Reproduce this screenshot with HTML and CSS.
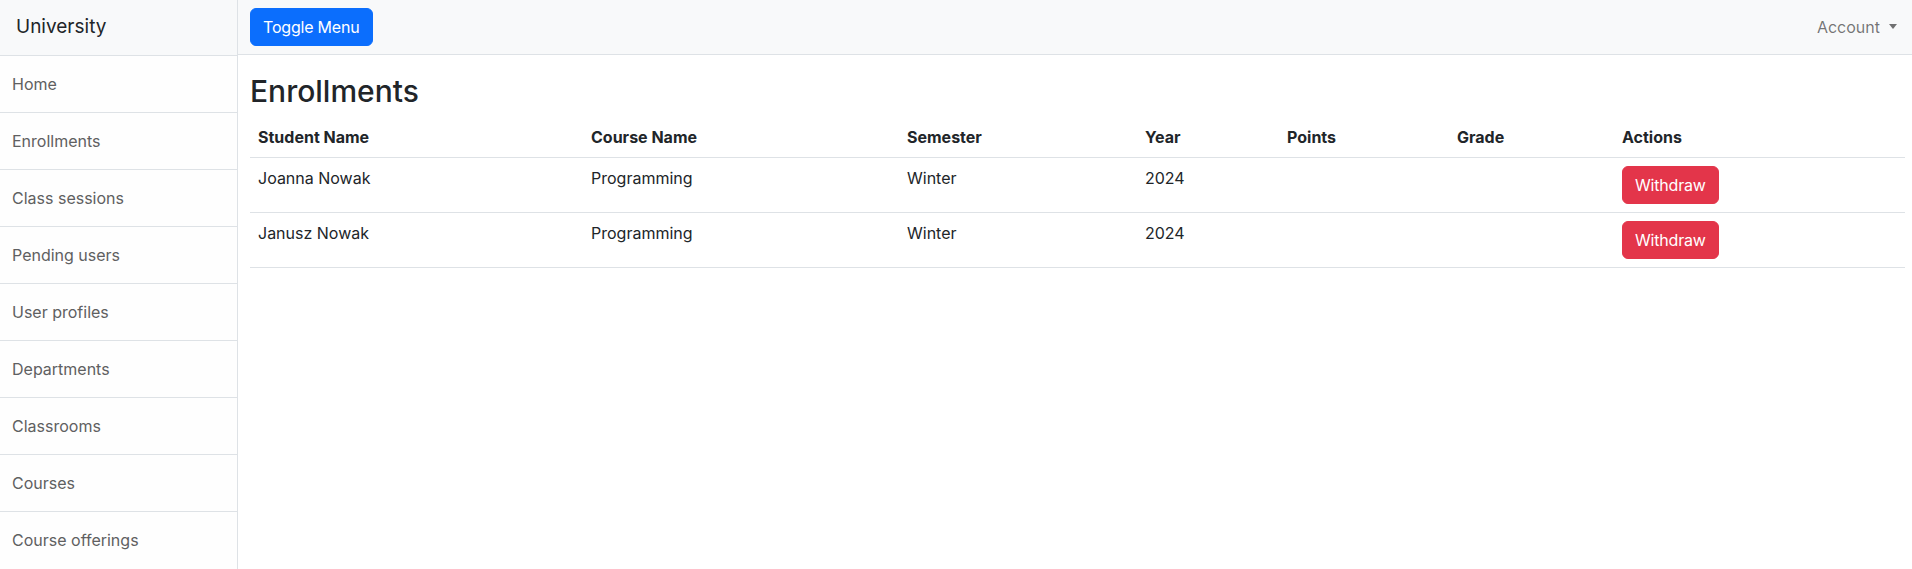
FILE: index.html
```html
<!DOCTYPE html>
<html lang="en">
<head>
<meta charset="utf-8">
<title>Enrollments</title>
<link rel="stylesheet" href="styles.css">
</head>
<body>
<div class="wrapper">
  <aside class="sidebar">
    <div class="sidebar-heading">University</div>
    <nav class="list-group">
      <a class="list-item" href="#">Home</a>
      <a class="list-item" href="#">Enrollments</a>
      <a class="list-item" href="#">Class sessions</a>
      <a class="list-item" href="#">Pending users</a>
      <a class="list-item" href="#">User profiles</a>
      <a class="list-item" href="#">Departments</a>
      <a class="list-item" href="#">Classrooms</a>
      <a class="list-item" href="#">Courses</a>
      <a class="list-item" href="#">Course offerings</a>
    </nav>
  </aside>
  <div class="page">
    <header class="navbar">
      <button class="btn btn-primary" type="button">Toggle Menu</button>
      <a class="nav-link dropdown-toggle" href="#">Account</a>
    </header>
    <main class="content">
      <h2 class="title">Enrollments</h2>
      <table class="table">
        <colgroup>
          <col class="c-student"><col class="c-course"><col class="c-sem"><col class="c-year"><col class="c-points"><col class="c-grade"><col class="c-actions">
        </colgroup>
        <thead>
          <tr><th>Student Name</th><th>Course Name</th><th>Semester</th><th>Year</th><th>Points</th><th>Grade</th><th>Actions</th></tr>
        </thead>
        <tbody>
          <tr><td>Joanna Nowak</td><td>Programming</td><td>Winter</td><td>2024</td><td></td><td></td><td><button class="btn btn-danger" type="button">Withdraw</button></td></tr>
          <tr><td>Janusz Nowak</td><td>Programming</td><td>Winter</td><td>2024</td><td></td><td></td><td><button class="btn btn-danger" type="button">Withdraw</button></td></tr>
        </tbody>
      </table>
    </main>
  </div>
</div>
</body>
</html>
```
FILE: styles.css
```css
* { box-sizing: border-box; }
html, body { margin: 0; padding: 0; }
body {
  font-family: Inter, "Liberation Sans", sans-serif;
  font-size: 16px;
  line-height: 1.5;
  color: #212529;
  background: #fff;
}
.wrapper { display: flex; min-height: 569px; }
.sidebar {
  width: 238px;
  flex: none;
  border-right: 1px solid #dee2e6;
  background: #fff;
}
.sidebar-heading {
  height: 56px;
  padding: 0 16px 1px;
  display: flex;
  align-items: center;
  font-size: 19px;
  background: #f8f9fa;
  border-bottom: 1px solid #dee2e6;
}
.list-group { display: flex; flex-direction: column; }
.list-item {
  display: block;
  height: 57px;
  padding: 16px 12px;
  color: #5f6061;
  text-decoration: none;
  border-bottom: 1px solid #dee2e6;
  background: #fefefe;
}
.list-item:last-child { border-bottom: none; }
.page { flex: 1; min-width: 0; }
.navbar {
  height: 55px;
  background: #f8f9fa;
  border-bottom: 1px solid #dee2e6;
  display: flex;
  align-items: center;
  justify-content: space-between;
  padding: 0 7px 1px 12px;
}
.btn {
  font-family: inherit;
  font-size: 16px;
  line-height: 24px;
  padding: 6px 12px;
  border: 1px solid transparent;
  border-radius: 6px;
  color: #fff;
  cursor: pointer;
  letter-spacing: -0.2px;
}
.btn-primary { background: #0b6efd; border-color: #0b6efd; }
.btn-danger { background: #e3354a; border-color: #e3354a; }
.nav-link {
  color: rgba(0,0,0,0.55);
  text-decoration: none;
  padding: 8px;
  display: flex;
  align-items: center;
}
.dropdown-toggle::after {
  content: "";
  margin-left: 9px;
  border-top: 5px solid;
  border-left: 4.5px solid transparent;
  border-right: 4.5px solid transparent;
}
.content { padding: 0 7px 0 12px; }
.title {
  margin: 18px 0 8px;
  font-size: 30px;
  font-weight: 500;
  line-height: 1.2;
}
.table {
  width: 100%;
  border-collapse: collapse;
  table-layout: fixed;
}
.c-student { width: 333px; }
.c-course { width: 316px; }
.c-sem { width: 238px; }
.c-year { width: 142px; }
.c-points { width: 170px; }
.c-grade { width: 165px; }
.c-actions { width: auto; }
.table th, .table td {
  padding: 8px;
  text-align: left;
  vertical-align: top;
  border-bottom: 1px solid #dee2e6;
}
.table th { font-weight: 700; }
.table td .btn { display: inline-block; }
```
